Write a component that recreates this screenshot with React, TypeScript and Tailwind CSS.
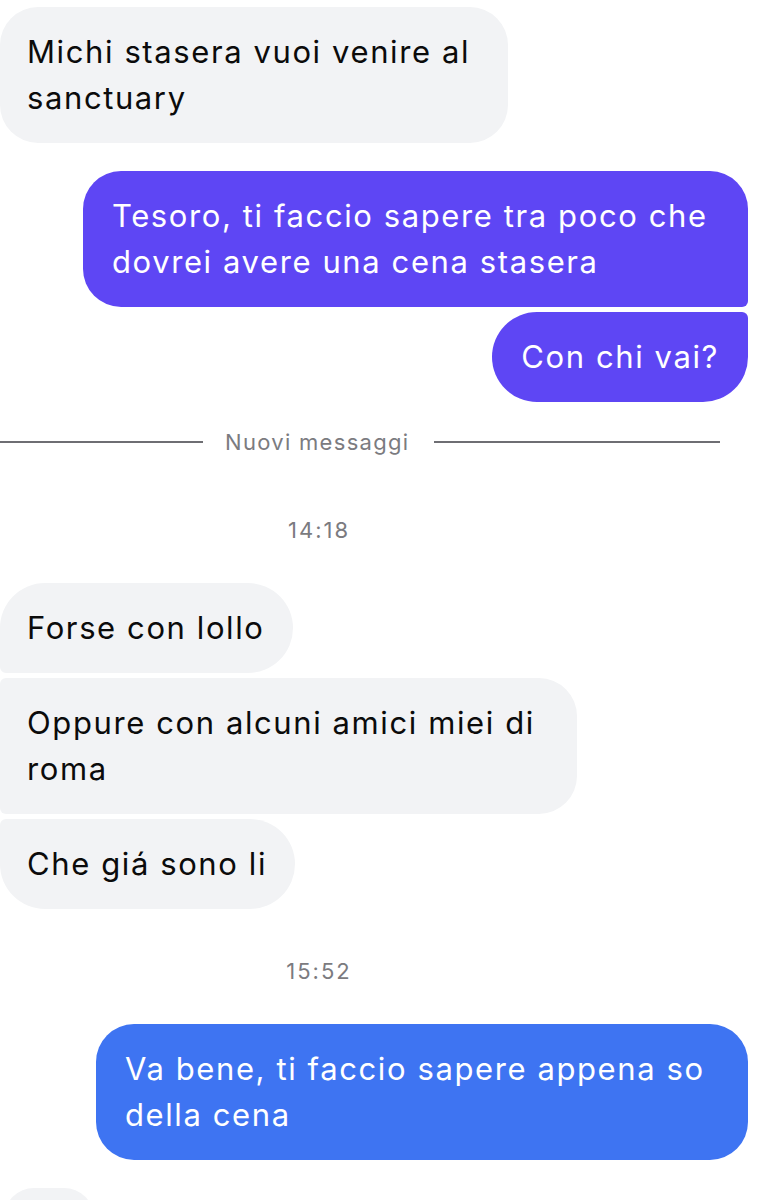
import React from "react";

const font = { fontFamily: "Inter, 'Liberation Sans', Arial, sans-serif" };

export default function App() {
  return (
    <div className="w-[767px] h-[1200px] overflow-hidden bg-white flex flex-col" style={font}>
      <div className="pt-[7px] flex flex-col">
        {/* incoming first */}
        <div className="w-[508px] rounded-[38px] bg-[#f2f3f5] pl-[27px] pr-[20px] py-[22px] text-[31px] leading-[46px] text-[#0b0b0b] tracking-[1.6px]">
          Michi stasera vuoi venire al sanctuary
        </div>

        {/* outgoing purple group */}
        <div className="mt-[28px] flex flex-col items-end pr-[19px] gap-[5px]">
          <div className="w-[665px] rounded-[38px] rounded-br-[6px] bg-[#5e46f4] pl-[29px] pr-[20px] py-[22px] text-[31px] leading-[46px] text-white tracking-[1.6px]">
            Tesoro, ti faccio sapere tra poco che dovrei avere una cena stasera
          </div>
          <div className="w-fit rounded-[45px] rounded-tr-[6px] bg-[#5e46f4] pl-[29px] pr-[29px] py-[22px] text-[31px] leading-[46px] text-white tracking-[1.6px]">
            Con chi vai?
          </div>
        </div>

        {/* divider */}
        <div className="mt-[25px] w-[720px] h-[30px] flex items-center">
          <div className="w-[203px] h-[2px] bg-[#6e6e73]" />
          <div className="pl-[22px] pr-[25px] text-[22px] text-[#7b7b80] tracking-[1.3px]">Nuovi messaggi</div>
          <div className="flex-1 h-[2px] bg-[#6e6e73]" />
        </div>

        {/* timestamp */}
        <div className="mt-[58px] w-[638px] h-[30px] flex items-center justify-center text-[22px] text-[#7b7b80] tracking-[2px]">
          14:18
        </div>

        {/* incoming group */}
        <div className="mt-[38px] flex flex-col items-start gap-[5px]">
          <div className="w-fit rounded-[45px] rounded-bl-[6px] bg-[#f2f3f5] pl-[27px] pr-[28px] py-[22px] text-[31px] leading-[46px] text-[#0b0b0b] tracking-[1.6px]">
            Forse con lollo
          </div>
          <div className="w-[577px] rounded-[38px] rounded-l-[6px] bg-[#f2f3f5] pl-[27px] pr-[20px] py-[22px] text-[31px] leading-[46px] text-[#0b0b0b] tracking-[1.6px]">
            Oppure con alcuni amici miei di roma
          </div>
          <div className="w-fit rounded-[45px] rounded-tl-[6px] bg-[#f2f3f5] pl-[27px] pr-[28px] py-[22px] text-[31px] leading-[46px] text-[#0b0b0b] tracking-[1.6px]">
            Che giá sono li
          </div>
        </div>

        {/* timestamp */}
        <div className="mt-[47px] w-[638px] h-[30px] flex items-center justify-center text-[22px] text-[#7b7b80] tracking-[2px]">
          15:52
        </div>

        {/* outgoing blue */}
        <div className="mt-[38px] flex flex-col items-end pr-[19px]">
          <div className="w-[652px] rounded-[38px] bg-[#3e74f2] pl-[29px] pr-[20px] py-[22px] text-[31px] leading-[46px] text-white tracking-[1.6px]">
            Va bene, ti faccio sapere appena so della cena
          </div>
        </div>

        {/* next incoming (cut off) */}
        <div className="mt-[28px] ml-[4px] w-[90px] h-[60px] rounded-[40px] bg-[#f2f3f5]" />
      </div>
    </div>
  );
}
